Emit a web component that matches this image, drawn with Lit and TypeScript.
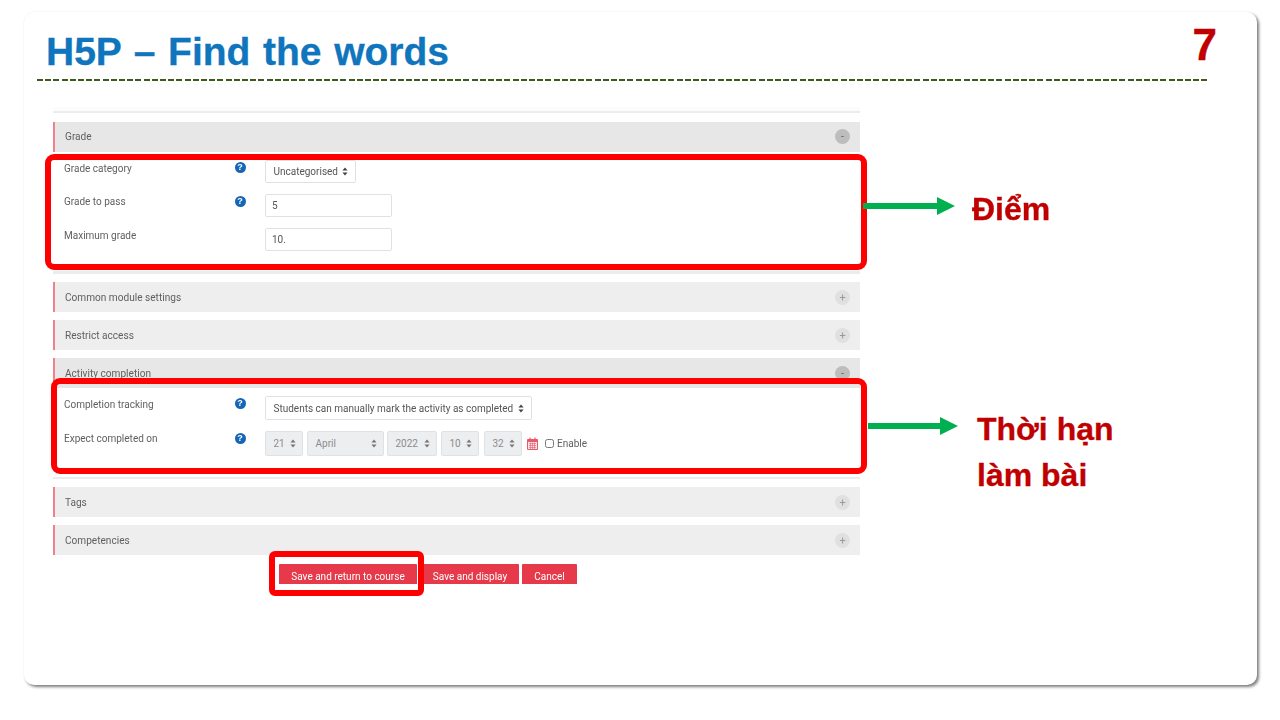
import { LitElement, html, css } from "lit";
import { customElement } from "lit/decorators.js";

const arrows = html`<svg class="chev" viewBox="0 0 6 9" width="6" height="9"><path d="M3 0.5 L5.6 3.6 H0.4 Z M3 8.5 L5.6 5.4 H0.4 Z" fill="currentColor"/></svg>`;

@customElement("app-root")
export class AppRoot extends LitElement {
  static styles = css`
    :host { display: block; width: 1280px; height: 720px; background: #fff; overflow: hidden; font-family: Roboto, "Liberation Sans", sans-serif; }
    * { box-sizing: border-box; }
    .page { padding: 12px 0 0 24px; }
    .slide { position: relative; width: 1233px; height: 673px; background: #fff; border-radius: 10px; box-shadow: 2px 2px 3px rgba(0,0,0,.5), 0 0 1px rgba(0,0,0,.08); }
    .head { display: flex; justify-content: space-between; height: 67px; padding: 20px 40px 0 22px; }
    .title { margin: 0; font: bold 39px/40px "Liberation Sans", Arial, sans-serif; word-spacing: 1.8px; color: #0f75bd; -webkit-text-stroke: .3px #0f75bd; }
    .num { font: bold 44px/30px "Liberation Sans", Arial, sans-serif; color: #c00000; -webkit-text-stroke: .4px #c00000; margin-top: -2px; }
    .dash { width: 1170px; margin-left: 13px; height: 2px; background: repeating-linear-gradient(90deg, #3f5a1e 0 6px, transparent 6px 8.2px); }
    .form { width: 807px; margin: 26px 0 0 29px; font-size: 10px; color: #5f5f5f; filter: blur(.4px); }
    .strip { height: 6px; border-bottom: 2px solid #ececec; background: #fcfcfc; margin-bottom: 9px; }
    .sec { margin-bottom: 8px; }
    .bar { display: flex; align-items: center; justify-content: space-between; height: 30px; padding: 0 10px; background: #eeeeee; border-left: 2px solid #f0808c; font-size: 10.1px; }
    .open .bar { background: #e7e7e7; }
    .first .bar { padding-bottom: 1px; }
    .tog { display: flex; align-items: center; justify-content: center; width: 15px; height: 15px; border-radius: 50%; background: #e0e0e0; color: #999; font-size: 11px; line-height: 15px; }
    .open .tog { background: #bdbdbd; color: #666; }
    .body { display: flex; flex-direction: column; border-bottom: 3px solid #ececec; padding: 8px 0 0 11px; }
    .g { height: 122px; gap: 11px; }
    .a { height: 91px; gap: 11px; border-bottom-width: 2px; }
    .row { display: flex; align-items: flex-start; }
    .label { width: 170.5px; line-height: 15px; font-size: 10px; }
    .row:first-child .label { padding-top: 1px; }
    .help { width: 30.5px; height: 15px; padding-top: 2px; }
    .q { display: block; width: 11px; height: 11px; border-radius: 50%; background: #1565b8; color: #fff; font: bold 9px/11px "Liberation Sans", sans-serif; text-align: center; }
    .sel { display: flex; align-items: center; justify-content: space-between; height: 24px; padding: 0 7px 0 7.5px; background: #fff; border: 1px solid #dee2e6; border-radius: 2px; font-size: 10px; white-space: nowrap; color: #555; }
    .sel .chev { flex: none; color: #444; margin-left: 3px; }
    .cat { width: 91px; height: 23px; }
    .track { width: 267px; }
    .inp { display: block; width: 127px; height: 23px; padding: 0 6px; border: 1px solid #dee2e6; border-radius: 2px; font: 10px Roboto, sans-serif; color: #555; background: #fff; outline: none; }
    .dates { display: flex; align-items: center; }
    .sel.dis { height: 25px; background: #eceef0; color: #8c8c8c; margin-right: 4px; padding: 0 6px 0 7.5px; }
    .dis .chev { color: #777; }
    .d1 { width: 38px; } .sel.d2 { width: 77px; margin-right: 3px; } .d3 { width: 50px; } .d4 { width: 38px; } .sel.d4 { margin-right: 5px; } .d5 { width: 38px; } .sel.d5 { margin-right: 5px; }
    .cal { display: block; width: 11px; height: 13px; margin-right: 7px; }
    .chk { width: 9px; height: 9px; margin: 0 3px 0 0; }
    .en { font-size: 10px; }
    .btns { display: flex; padding-left: 226px; margin-top: 9px; }
    .btn { display: flex; align-items: center; justify-content: center; height: 20px; padding-top: 4px; background: #e63a4a; color: #fff; font-size: 10px; border-radius: 1px 1px 0 0; }
    .b1 { width: 138px; margin-right: 6px; } .b2 { width: 96px; margin-right: 3px; padding-right: 2px; } .b3 { width: 55px; }
    .mark { position: absolute; border: 6px solid #ff0000; border-radius: 9px; }
    .m1 { left: 21px; top: 142px; width: 822px; height: 116px; }
    .m2 { left: 27px; top: 366px; width: 816px; height: 96px; }
    .m3 { left: 245px; top: 539px; width: 155px; height: 45px; border-radius: 6px; }
    .arrow { position: absolute; display: block; }
    .a1 { left: 839px; top: 185px; }
    .a2 { left: 844px; top: 405px; }
    .note { position: absolute; font: bold 32px/46px "Liberation Sans", Arial, sans-serif; color: #c00000; white-space: nowrap; -webkit-text-stroke: .3px #c00000; }
    .n1 { left: 948px; top: 174px; }
    .n2 { left: 953px; top: 394px; }
  `;

  private bar(name: string, open = false) {
    return html`<div class="bar"><span>${name}</span><span class="tog">${open ? "-" : "+"}</span></div>`;
  }

  private help() {
    return html`<span class="help"><span class="q">?</span></span>`;
  }

  render() {
    const arrow = (cls: string, w: number) => html`<svg class="arrow ${cls}" width=${w} height="18" viewBox="0 0 ${w} 18"><path d="M0 6 H${w - 18} V0 L${w} 9 L${w - 18} 18 V12 H0 Z" fill="#00b050"/></svg>`;
    return html`
      <div class="page">
        <div class="slide">
          <div class="head">
            <h1 class="title">H5P – Find the words</h1>
            <span class="num">7</span>
          </div>
          <div class="dash"></div>
          <div class="form">
            <div class="strip"></div>
            <div class="sec open first">
              ${this.bar("Grade", true)}
              <div class="body g">
                <div class="row"><span class="label">Grade category</span>${this.help()}<div class="sel cat">Uncategorised ${arrows}</div></div>
                <div class="row"><span class="label">Grade to pass</span>${this.help()}<input class="inp" value="5" /></div>
                <div class="row"><span class="label">Maximum grade</span><span class="help"></span><input class="inp" value="10." /></div>
              </div>
            </div>
            <div class="sec">${this.bar("Common module settings")}</div>
            <div class="sec">${this.bar("Restrict access")}</div>
            <div class="sec open">
              ${this.bar("Activity completion", true)}
              <div class="body a">
                <div class="row"><span class="label">Completion tracking</span>${this.help()}<div class="sel track">Students can manually mark the activity as completed ${arrows}</div></div>
                <div class="row"><span class="label">Expect completed on</span>${this.help()}
                  <div class="dates">
                    <div class="sel dis d1">21 ${arrows}</div>
                    <div class="sel dis d2">April ${arrows}</div>
                    <div class="sel dis d3">2022 ${arrows}</div>
                    <div class="sel dis d4">10 ${arrows}</div>
                    <div class="sel dis d5">32 ${arrows}</div>
                    <svg class="cal" viewBox="0 0 11 13"><path d="M0.5 2.5 H10.5 V12.5 H0.5 Z" fill="#fbe3e6" stroke="#e8596a"/><path d="M0.5 2.5 H10.5 V5 H0.5 Z" fill="#e8596a"/><path d="M3 0.5 V3 M8 0.5 V3" stroke="#e8596a" stroke-width="1.2"/><path d="M2 6.5 H9 M2 8.5 H9 M2 10.5 H9 M3.5 5.5 V12 M5.5 5.5 V12 M7.5 5.5 V12" stroke="#e8596a" stroke-width=".6"/></svg>
                    <input class="chk" type="checkbox" /><span class="en">Enable</span>
                  </div>
                </div>
              </div>
            </div>
            <div class="sec">${this.bar("Tags")}</div>
            <div class="sec">${this.bar("Competencies")}</div>
            <div class="btns">
              <div class="btn b1">Save and return to course</div>
              <div class="btn b2">Save and display</div>
              <div class="btn b3">Cancel</div>
            </div>
          </div>
          <div class="mark m1"></div>
          <div class="mark m2"></div>
          <div class="mark m3"></div>
          ${arrow("a1", 92)}
          ${arrow("a2", 90)}
          <div class="note n1">Điểm</div>
          <div class="note n2">Thời hạn<br />làm bài</div>
        </div>
      </div>
    `;
  }
}
